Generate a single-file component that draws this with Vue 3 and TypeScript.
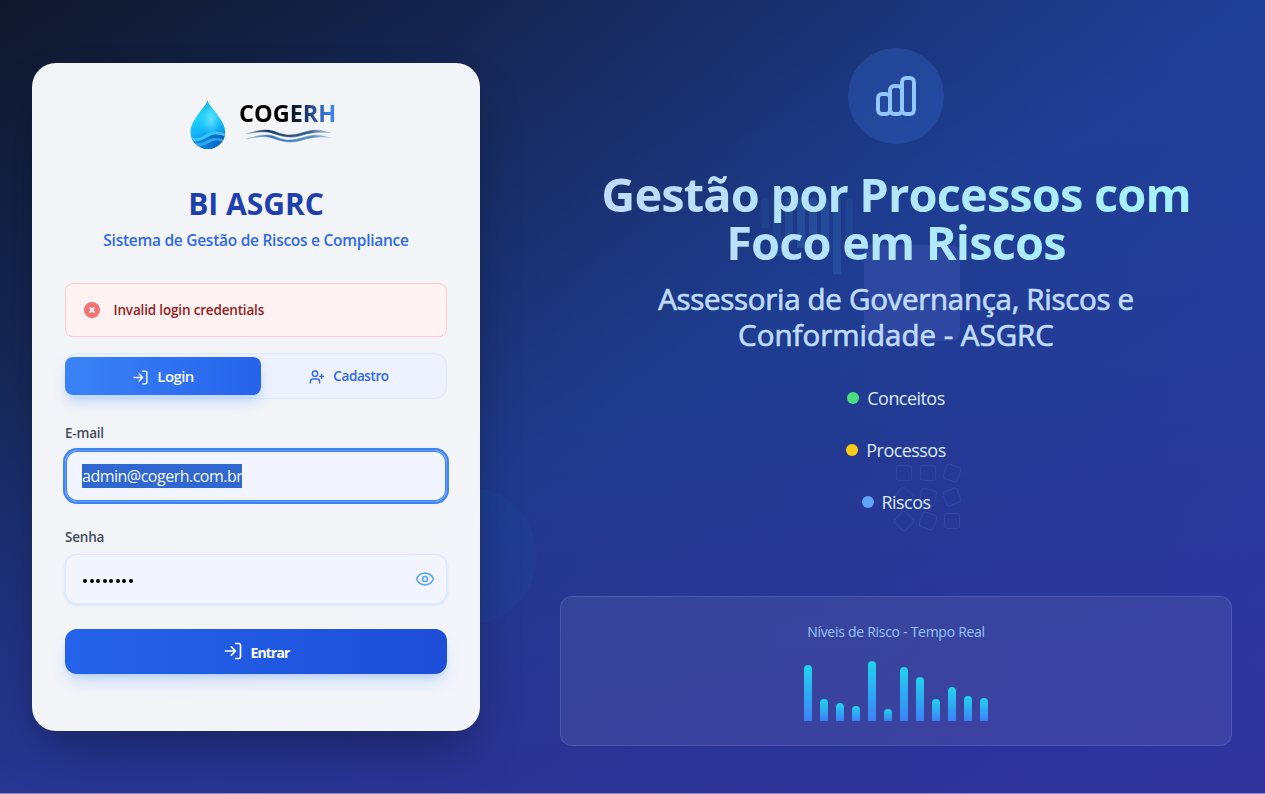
<script setup lang="ts">
import { ref } from 'vue'

const email = ref('admin@cogerh.com.br')
const password = ref('cogerh01')
const riskLevels: number[] = [56, 22.5, 18.5, 15, 60, 12, 54.5, 44, 22.5, 34, 25, 23.5]
const topics = [
  { label: 'Conceitos', tone: 'green' },
  { label: 'Processos', tone: 'yellow' },
  { label: 'Riscos', tone: 'blue' },
]
const ghostBars = [
  { height: 30, alpha: 0.12 }, { height: 58, alpha: 0.14 }, { height: 44, alpha: 0.2 }, { height: 50, alpha: 0.27 },
  { height: 36, alpha: 0.27 }, { height: 52, alpha: 0.24 }, { height: 76, alpha: 0.22 }, { height: 40, alpha: 0.12 },
]
const tiles: number[] = [2, 2, 18, 35, 12, -20, 45, 18, 0]
</script>

<template>
  <main class="page">
    <div class="tint"></div>
    <div class="orb"></div>
    <div class="block"></div>
    <div class="ghost-bars">
      <i v-for="(b, i) in ghostBars" :key="i" :style="{ height: b.height + 'px', opacity: b.alpha }"></i>
    </div>
    <div class="tiles">
      <i v-for="(r, i) in tiles" :key="i" :style="{ transform: `rotate(${r}deg)` }"></i>
    </div>

    <section class="card">
      <div class="logo">
        <svg class="drop" width="36" height="50" viewBox="0 0 36 50">
          <defs>
            <linearGradient id="dropFill" x1="0.35" y1="0" x2="0.6" y2="1">
              <stop offset="0" stop-color="#16a9e0" />
              <stop offset="0.3" stop-color="#22d3fb" />
              <stop offset="0.6" stop-color="#12b4fa" />
              <stop offset="1" stop-color="#0565c8" />
            </linearGradient>
            <radialGradient id="dropShine" cx="0.5" cy="0.5" r="0.5">
              <stop offset="0" stop-color="#9af2ff" stop-opacity="0.6" />
              <stop offset="1" stop-color="#6eeaff" stop-opacity="0" />
            </radialGradient>
            <linearGradient id="dropDeep" x1="0" x2="1">
              <stop offset="0" stop-color="#0a9af0" />
              <stop offset="1" stop-color="#055dbe" />
            </linearGradient>
            <clipPath id="dropClip"><path d="M17.5 .5C15 8 .5 20 .5 32a17.3 17 0 0 0 34.7 0C35.2 20 20 8 17.5 .5Z" /></clipPath>
          </defs>
          <g clip-path="url(#dropClip)">
            <rect width="36" height="50" fill="url(#dropFill)" />
            <ellipse cx="21" cy="20" rx="10" ry="15" fill="url(#dropShine)" />
            <path d="M0 36c8 5 12 0 18-3 6-3 12-2 18 1v16H0Z" fill="url(#dropDeep)" />
            <path d="M0 36c8 5 12 0 18-3 6-3 12-2 18 1v3c-7-3-11-3-16-1-7 3-12 8-20 3Z" fill="#3cc4f8" />
            <path d="M2 42c8 3 12 0 18-3 5-2 9-1 14 1v2c-6-2-9-2-13 0-7 4-13 6-19 2Z" fill="#2fa5ea" />
          </g>
        </svg>
        <div class="brand">
          <span class="brand-name">COGERH</span>
          <svg class="waves" width="88" height="14" viewBox="0 0 88 14" fill="none">
            <defs>
              <linearGradient id="waveDark"><stop stop-color="#173a68" stop-opacity=".25" /><stop offset=".22" stop-color="#173a68" /><stop offset=".75" stop-color="#315e92" /><stop offset="1" stop-color="#315e92" stop-opacity=".2" /></linearGradient>
              <linearGradient id="waveLight"><stop stop-color="#3978bb" stop-opacity=".3" /><stop offset=".3" stop-color="#3978bb" /><stop offset=".8" stop-color="#5690c9" /><stop offset="1" stop-color="#5690c9" stop-opacity=".2" /></linearGradient>
            </defs>
            <path d="M1 5C12 2 21-1 31 3c12 5 18 3 29 0 10-3 17-2 26 1-9-1-17-1-25 1-12 4-19 4-31 0C20 1 13 3 1 5Z" fill="url(#waveDark)" stroke="url(#waveDark)" stroke-width=".5" />
            <path d="M1 10C12 7 21 4 31 8c12 5 18 3 29 0 10-3 17-2 26 1-9-2-17-1-25 1-12 4-19 4-31 0C20 6 13 8 1 10Z" fill="url(#waveLight)" stroke="url(#waveLight)" stroke-width=".4" />
          </svg>
        </div>
      </div>

      <h1 class="title"><span>BI ASGRC</span></h1>
      <p class="subtitle"><span>Sistema de Gestão de Riscos e Compliance</span></p>

      <div class="alert">
        <svg width="20" height="20" viewBox="0 0 20 20" fill="#f87171"><path fill-rule="evenodd" clip-rule="evenodd" d="M10 18a8 8 0 100-16 8 8 0 000 16zM8.707 7.293a1 1 0 00-1.414 1.414L8.586 10l-1.293 1.293a1 1 0 101.414 1.414L10 11.414l1.293 1.293a1 1 0 001.414-1.414L11.414 10l1.293-1.293a1 1 0 00-1.414-1.414L10 8.586 8.707 7.293z" /></svg>
        <span>Invalid login credentials</span>
      </div>

      <div class="tabs">
        <button class="tab active" type="button">
          <svg width="17" height="17" viewBox="0 0 24 24"><path d="M15 3h4a2 2 0 0 1 2 2v14a2 2 0 0 1-2 2h-4M10 17l5-5-5-5M15 12H3" /></svg>
          <span>Login</span>
        </button>
        <button class="tab" type="button">
          <svg width="16" height="16" viewBox="0 0 24 24"><path d="M16 21v-2a4 4 0 0 0-4-4H6a4 4 0 0 0-4 4v2M19 8v6M22 11h-6" /><circle cx="9" cy="7" r="4" /></svg>
          <span>Cadastro</span>
        </button>
      </div>

      <label class="label" for="email">E-mail</label>
      <div class="field focused" id="email"><span class="selected">{{ email }}</span></div>

      <label class="label second" for="password">Senha</label>
      <div class="field" id="password">
        <span class="dots"><i v-for="(_, i) in password" :key="i"></i></span>
        <svg class="eye" width="20" height="20" viewBox="0 0 24 24"><path d="M2.06 12.35a1 1 0 0 1 0-.7 10.75 10.75 0 0 1 19.88 0 1 1 0 0 1 0 .7 10.75 10.75 0 0 1-19.88 0" /><circle cx="12" cy="12" r="3" /></svg>
      </div>

      <button class="submit" type="button">
        <svg width="20" height="20" viewBox="0 0 24 24"><path d="M15 3h4a2 2 0 0 1 2 2v14a2 2 0 0 1-2 2h-4M10 17l5-5-5-5M15 12H3" /></svg>
        <span>Entrar</span>
      </button>
    </section>

    <section class="hero">
      <div class="badge">
        <svg width="48" height="48" viewBox="0 0 24 24"><rect x="3" y="11" width="6" height="10" rx="2" /><rect x="9" y="7" width="6" height="14" rx="2" /><rect x="15" y="3" width="6" height="18" rx="2" /></svg>
      </div>
      <h2 class="headline">Gestão por Processos com<br />Foco em Riscos</h2>
      <p class="department"><span class="wide">Assessoria de Governança, Riscos e</span><br /><span>Conformidade - ASGRC</span></p>
      <ul class="topics">
        <li v-for="t in topics" :key="t.label"><i :class="t.tone"></i><span>{{ t.label }}</span></li>
      </ul>
      <div class="chart">
        <p><span>Níveis de Risco - Tempo Real</span></p>
        <div class="bars"><i v-for="(h, i) in riskLevels" :key="i" :style="{ height: h + 'px' }"></i></div>
      </div>
    </section>
  </main>
</template>

<style>
body { margin: 0; background: #fff; }
</style>

<style scoped>
* { box-sizing: border-box; }
.page {
  position: relative; display: flex; width: 1265px; height: 794px; overflow: hidden;
  border-bottom: 1px solid #8b8ac2;
  font-family: "Open Sans", "Noto Sans", sans-serif;
  background: linear-gradient(to bottom right, #0f172a 0%, #1e3a8a 50%, #312e91 100%);
}
h1, h2, p, ul { margin: 0; padding: 0; }
span { white-space: nowrap; }
button { border: 0; font-family: inherit; padding: 0; }
.tint, .orb, .block, .ghost-bars, .tiles { position: absolute; }
.tint {
  inset: 0;
  background:
    linear-gradient(to top, rgba(52,46,160,.36), rgba(52,46,160,0) 50%),
    linear-gradient(90deg, rgba(37,99,235,0) 35%, rgba(37,99,235,.15));
}
.orb { left: 399px; top: 487px; width: 138px; height: 138px; border-radius: 50%; background: rgba(20,100,180,.1); }
.block { left: 864px; top: 245px; width: 96px; height: 96px; border-radius: 8px; background: rgba(112,124,226,.18); }
.ghost-bars { left: 761px; top: 198px; display: flex; gap: 4px; align-items: flex-start; }
.ghost-bars i { width: 8px; background: #3b82c8; border-radius: 4px 4px 0 0; }
.tiles { left: 896px; top: 465px; display: grid; grid-template-columns: repeat(3, 16px); gap: 8px; }
.tiles i { height: 16px; border: 1px solid rgba(96,140,230,.18); border-radius: 3px; }

.card {
  position: relative; width: 448px; height: 668px; margin: 63px 0 0 32px; padding: 32px 33px;
  border-radius: 24px; background: linear-gradient(135deg, #f3f4f6, #f3f5fa);
  box-shadow: 0 25px 50px -12px rgba(0,0,0,.35);
}
.logo { display: flex; height: 60px; padding: 5px 0 0 124.5px; }
.brand { margin-left: 13.5px; display: flex; flex-direction: column; }
.brand-name {
  font-size: 23.5px; line-height: 27px; font-weight: 700; letter-spacing: 0;
  background: linear-gradient(90deg, #000 48%, #1e3a6b 70%, #3b82f6 94%);
  -webkit-background-clip: text; background-clip: text; color: transparent;
}
.waves { margin: 2px 0 0 6px; }
.title { margin-top: 29px; text-align: center; font-size: 30px; line-height: 40px; font-weight: 700; color: #1e40af; }
.subtitle {
  margin-top: 4px; text-align: center; font-size: 15.5px; line-height: 24px; letter-spacing: -.27px;
  color: #2f68ec; font-weight: 600;
}
.alert {
  margin-top: 31px; height: 54px; display: flex; align-items: center; padding: 0 17px; gap: 12px;
  border: 1px solid #fecaca; border-radius: 8px; background: #fef2f2; color: #991b1b;
  font-size: 13.5px; letter-spacing: -.17px; font-weight: 600;
}
.alert svg { margin: -1px 0 0 -1.5px; }
.tabs {
  margin-top: 16px; height: 46px; display: grid; grid-template-columns: 195px 1fr; align-items: center;
  border: 1px solid #dbeafe; border-radius: 12px; background: #edf2fe;
}
.tab {
  height: 38px; display: flex; align-items: center; justify-content: center; gap: 8px; padding-right: 9px;
  background: none; color: #2f68ec; font-size: 13.5px; font-weight: 600;
}
.tab span { letter-spacing: -.4px; }
.tab svg { margin-top: 1px; }
.tab.active {
  margin-left: -1px; padding-right: 0; border-radius: 8px; color: #f5f8ff; font-size: 15px;
  background: linear-gradient(90deg, #3b82f6, #2563eb); box-shadow: 0 8px 14px -2px rgba(59,130,246,.3);
}
.tab.active span { letter-spacing: -.6px; }
.tab.active svg { margin-top: 3px; }
svg { flex: none; }
.tab svg, .submit svg, .eye, .badge svg { fill: none; stroke: currentColor; stroke-width: 2; stroke-linecap: round; stroke-linejoin: round; }
.label {
  display: block; margin-top: 24px; height: 20px; font-size: 13.5px; line-height: 20px; color: #414b5a;
  font-weight: 600; letter-spacing: -.2px;
}
.field {
  height: 50px; margin-top: 7px; padding: 0 16px; display: flex; align-items: center;
  border: 1px solid #dbeafe; border-radius: 12px; background: #f2f5fd; box-shadow: 0 1px 2px 1px rgba(191,219,254,.45);
}
.field.focused { height: 52px; border: 1px solid #6aa1f8; box-shadow: 0 0 0 2px #3f84f5, inset 0 0 0 1px #3b82f6; }
.selected { background: #3067d0; color: #f4f8ff; font-size: 16px; line-height: 24px; letter-spacing: -.5px; }
.label.second { margin-top: 25px; }
.dots { display: flex; gap: 2.5px; margin: 3px 0 0 1px; }
.dots i { width: 4px; height: 4px; border-radius: 50%; background: #000; }
.eye { margin: -1px -5px 0 auto; color: #60a5fa; }
.submit {
  margin-top: 25px; width: 100%; height: 45px; display: flex; align-items: center; justify-content: center; gap: 8px;
  border-radius: 12px; background: linear-gradient(90deg, #2563eb, #1d4ed8); color: #fff; font-size: 14px; font-weight: 700;
  box-shadow: 0 10px 15px -3px rgba(59,130,246,.25), 0 4px 6px -4px rgba(59,130,246,.25);
}
.submit svg { margin-top: -2px; }
.submit span { letter-spacing: -.9px; margin-top: 2px; }

.hero { position: relative; width: 672px; margin: 48px 0 0 80px; display: flex; flex-direction: column; align-items: center; }
.badge { width: 96px; height: 96px; border-radius: 50%; background: rgba(59,130,246,.22); color: #93c5fd; display: grid; place-items: center; }
.headline {
  margin-top: 26px; width: 590px; white-space: nowrap; text-align: center; font-size: 47px; line-height: 48px; font-weight: 700; letter-spacing: -.87px;
  background: linear-gradient(90deg, #bfdbfe, #a5f3fc); -webkit-background-clip: text; background-clip: text; color: transparent;
}
.department { margin-top: 15px; text-align: center; font-size: 29.5px; line-height: 36px; color: #bfdbfe; -webkit-text-stroke: .7px currentColor; }
.department .wide { letter-spacing: -.3px; }
.topics { margin-top: 31px; list-style: none; display: flex; flex-direction: column; align-items: center; gap: 24px; }
.topics li { height: 28px; display: flex; align-items: center; gap: 8px; color: #dbeafe; font-size: 18px; letter-spacing: -.55px; }
.topics i { width: 12px; height: 12px; border-radius: 50%; }
.green { background: #4ade80; }
.yellow { background: #facc15; }
.blue { background: #60a5fa; }
.chart { width: 672px; height: 150px; margin-top: 80px; padding: 25px; border: 1px solid rgba(120,160,245,.25); border-radius: 12px; background: rgba(255,255,255,.07); text-align: center; }
.chart p { font-size: 14px; line-height: 20px; letter-spacing: -.28px; color: #93c5fd; }
.bars { margin-top: 15px; height: 64px; display: flex; align-items: flex-end; justify-content: center; gap: 8px; }
.bars i { width: 8px; border-radius: 4px 4px 0 0; background: linear-gradient(to top, #3b82f6, #22d3ee); }
</style>
